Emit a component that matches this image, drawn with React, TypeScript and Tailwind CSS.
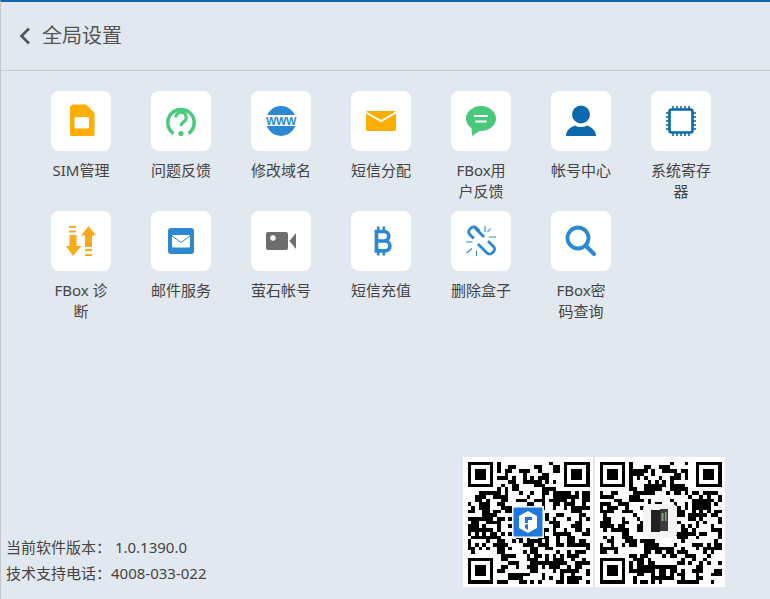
import React from "react";

const BLUE = "#2b88d3";
const DARK = "#0d69ae";
const ORANGE = "#ffae00";
const AMBER = "#f9ab1a";
const GREEN = "#49c97c";

function Svg({ children }: { children: React.ReactNode }) {
  return (
    <svg width="36" height="36" viewBox="0 0 36 36" fill="none">
      {children}
    </svg>
  );
}

const Sim = () => (
  <Svg>
    <path d="M8 3.5a1.5 1.5 0 0 1 1.5-1.5H22.5L31 10.500V32a1.500 1.500 0 0 1-1.500 1.500H8A1.500 1.500 0 0 1 6.500 32V3.500z" transform="translate(0.500 -0.500)" fill={ORANGE} />
    <rect x="11.500" y="14" width="14.500" height="11.500" rx="1.500" fill="#fff" />
  </Svg>
);
const Help = () => (
  <Svg>
    <path d="M10.500 30.500A13.200 13.200 0 1 1 25.500 30.500" stroke={GREEN} strokeWidth="3.500" strokeLinecap="butt" />
    <path d="M12.800 14.500a5.200 5.200 0 1 1 7.900 4.400c-1.800 1.100-2.700 1.900-2.700 4.100" stroke={GREEN} strokeWidth="3" />
    <circle cx="18" cy="30.500" r="2.600" fill={GREEN} />
  </Svg>
);
const Www = () => (
  <Svg>
    <circle cx="18" cy="18" r="15" fill={BLUE} />
    <rect x="3" y="12" width="30" height="11" fill="#fff" />
    <rect x="3" y="13.800" width="30" height="0" fill="#fff" />
    <text x="18" y="21.500" textAnchor="middle" fontSize="11" fontWeight="700" fill={BLUE} fontFamily="'Liberation Sans',sans-serif" letterSpacing="-0.300">WWW</text>
  </Svg>
);
const Mail = () => (
  <Svg>
    <rect x="3" y="8" width="30" height="20" rx="1.500" fill={ORANGE} />
    <path d="M3 9.500L18 18L33 9.500" stroke="#fff" strokeWidth="2" />
  </Svg>
);
const Chat = () => (
  <Svg>
    <path d="M18 3C9.700 3 3 8.600 3 15.500c0 3.900 2.100 7.400 5.500 9.700L9 33l7.500-5.100c.5 0 1 .1 1.500.1 8.300 0 15-5.600 15-12.500S26.300 3 18 3z" fill={GREEN} />
    <rect x="11" y="12" width="14" height="2" fill="#fff" />
    <rect x="12.500" y="17.500" width="11" height="2" fill="#fff" />
  </Svg>
);
const User = () => (
  <Svg>
    <circle cx="18" cy="11.500" r="9" fill={DARK} />
    <path d="M3 33c0-5.500 4.500-9 9-10.500 3.500 2 8.500 2 12 0C28.500 24 33 27.500 33 33z" fill={DARK} />
  </Svg>
);
const Chip = () => (
  <Svg>
    <rect x="6.500" y="6.500" width="23" height="23" rx="2" stroke={DARK} strokeWidth="2.600" />
    {[10, 14, 18, 22, 26].map((p) => (
      <g key={p} fill={DARK}>
        <rect x={p - 0.8} y="3" width="1.600" height="3" />
        <rect x={p - 0.8} y="30" width="1.600" height="3" />
        <rect x="3" y={p - 0.8} width="3" height="1.600" />
        <rect x="30" y={p - 0.8} width="3" height="1.600" />
      </g>
    ))}
  </Svg>
);
const Diag = () => (
  <Svg>
    <g fill={AMBER}>
      <rect x="6" y="3" width="7" height="2" />
      <rect x="6" y="7.500" width="7" height="2" />
      <path d="M6.500 12h7v11H18.500L10 33 3 23H6.500z" transform="translate(0 0)" />
      <path d="M25.500 3L33 12.500H29V24H22V12.500H18z" transform="translate(0 0)" />
      <rect x="22" y="26" width="7" height="2" />
      <rect x="22" y="31" width="7" height="2" />
    </g>
  </Svg>
);
const MailBox = () => (
  <Svg>
    <rect x="5" y="5" width="26" height="26" rx="3" fill={BLUE} />
    <rect x="9" y="12" width="18" height="12.500" rx="1" fill="#fff" />
    <path d="M9 13L18 19.500L27 13" stroke={BLUE} strokeWidth="1" />
  </Svg>
);
const Cam = () => (
  <Svg>
    <rect x="3" y="9" width="22" height="18" rx="2" fill="#6e6e6e" />
    <circle cx="10" cy="15" r="2.700" fill="#fff" />
    <path d="M26.500 18L33 10V26z" fill="#6e6e6e" />
  </Svg>
);
const Btc = () => (
  <Svg>
    <path d="M11.500 8.500H21a4.700 4.700 0 0 1 0 9.500H13.500M13.500 18H22a4.900 4.900 0 0 1 0 9.800H11.500M13.500 8.500V27.800" stroke={BLUE} strokeWidth="3.700" />
    <path d="M15.200 3.500V7M20.800 3.500V7M15.200 29V32.500M20.800 29V32.500" stroke={BLUE} strokeWidth="2.600" />
  </Svg>
);
const Broken = () => (
  <Svg>
    <path d="M10.800 15.500L6.800 11.500a3.700 3.700 0 0 1 0-5.300l1.300-1.200a3.700 3.700 0 0 1 5.200 0L16.500 8.200" stroke={BLUE} strokeWidth="2.800" transform="translate(0 0)" />
    <path d="M8.500 6.500L17 6" stroke={BLUE} strokeWidth="0" />
    <path d="M12 5L21 14" stroke={BLUE} strokeWidth="2.800" />
    <path d="M15 21L24 30a3.700 3.700 0 0 0 5.200 0l1.300-1.300a3.700 3.700 0 0 0 0-5.200L25 18" stroke={BLUE} strokeWidth="2.800" />
    <path d="M22 3V9M27.500 5.500L24.500 9M33 14H26M3 19H9.500M3.500 30L9 25.500M13.500 28V33" stroke={BLUE} strokeWidth="1.100" />
  </Svg>
);
const Search = () => (
  <Svg>
    <circle cx="15" cy="15" r="10.500" stroke={BLUE} strokeWidth="3.800" />
    <path d="M23.500 23.500L31 31" stroke={BLUE} strokeWidth="4" strokeLinecap="round" />
  </Svg>
);

const items: { label: string; icon: React.ReactNode }[] = [
  { label: "SIM管理", icon: <Sim /> },
  { label: "问题反馈", icon: <Help /> },
  { label: "修改域名", icon: <Www /> },
  { label: "短信分配", icon: <Mail /> },
  { label: "FBox用户反馈", icon: <Chat /> },
  { label: "帐号中心", icon: <User /> },
  { label: "系统寄存器", icon: <Chip /> },
  { label: "FBox 诊断", icon: <Diag /> },
  { label: "邮件服务", icon: <MailBox /> },
  { label: "萤石帐号", icon: <Cam /> },
  { label: "短信充值", icon: <Btc /> },
  { label: "删除盒子", icon: <Broken /> },
  { label: "FBox密码查询", icon: <Search /> },
];

function qrModules(seed: number) {
  const n = 33;
  const rects: { x: number; y: number }[] = [];
  let s = seed;
  const rnd = () => {
    s = (s * 1664525 + 1013904223) >>> 0;
    return (s >>> 16) / 65536;
  };
  const inFinder = (x: number, y: number) =>
    (x < 8 && y < 8) || (x >= n - 8 && y < 8) || (x < 8 && y >= n - 8);
  const grid: boolean[][] = [];
  for (let y = 0; y < n; y++) {
    grid.push([]);
    for (let x = 0; x < n; x++) {
      const prevA = x > 0 ? grid[y][x - 1] : false;
      const prevB = y > 0 ? grid[y - 1][x] : false;
      const p = 0.34 + (prevA ? 0.14 : 0) + (prevB ? 0.14 : 0);
      grid[y].push(rnd() < p);
      if (grid[y][x] && !inFinder(x, y)) rects.push({ x, y });
    }
  }
  return rects;
}

function Finder({ x, y }: { x: number; y: number }) {
  return (
    <g>
      <path d={`M${x} ${y}h7v7h-7zM${x + 1} ${y + 1}v5h5v-5z`} fill="#000" fillRule="evenodd" />
      <rect x={x + 2} y={y + 2} width="3" height="3" fill="#000" />
    </g>
  );
}

function Qr({ seed, logo }: { seed: number; logo: "blue" | "device" }) {
  const mods = qrModules(seed);
  return (
    <svg width="130" height="130" viewBox="0 0 130 130" className="block">
      <rect width="130" height="130" fill="#fff" />
      <g transform="translate(4.500 4.500) scale(3.700)" shapeRendering="crispEdges">
        {mods.map((m) => (
          <rect key={`${m.x}-${m.y}`} x={m.x} y={m.y} width="1" height="1" fill="#000" />
        ))}
        <Finder x={0} y={0} />
        <Finder x={26} y={0} />
        <Finder x={0} y={26} />
      </g>
      {logo === "blue" ? (
        <g>
          <rect x="49" y="49" width="32" height="32" fill="#fff" />
          <rect x="50.500" y="50.500" width="29" height="29" rx="1" fill="#1f78dc" />
          <path d="M65 54l9 5v12l-9 5-9-5V59z" fill="#fff" />
          <path d="M62 60h7v3h-4v3h-3zM62 68l3-1v6l-3-2z" fill="#1f78dc" />
        </g>
      ) : (
        <g>
          <rect x="48" y="47" width="34" height="34" rx="5" fill="#f4f4f4" />
          <rect x="56" y="53" width="9" height="22" fill="#222" />
          <rect x="65" y="52" width="8" height="22" fill="#3b3b3b" />
          <rect x="66.500" y="56" width="2" height="8" fill="#7fae6e" />
          <rect x="70" y="55" width="1.500" height="9" fill="#9a9a9a" />
        </g>
      )}
    </svg>
  );
}

export default function App() {
  return (
    <div
      className="flex h-[599px] w-[770px] flex-col overflow-hidden border-t-2 border-l border-t-[#0d69ae] border-l-[#c4c6c8] bg-[#e1e8ef] text-[15px] leading-[21px] text-[#444]"
      style={{ fontFamily: '"Noto Sans","Noto Sans CJK SC",sans-serif' }}
    >
      <header className="flex h-[69px] shrink-0 items-center border-b border-[#c9cbcd] pl-[18px]">
        <svg width="12" height="18" viewBox="0 0 12 18" fill="none">
          <path d="M10 1.500L2.500 9L10 16.500" stroke="#555" strokeWidth="2.600" />
        </svg>
        <span className="ml-[11px] text-[20px] leading-[28px] text-[#555]">全局设置</span>
      </header>
      <main className="grid flex-1 grid-cols-[repeat(7,100px)] content-start pl-[50px] pt-5">
        {items.map((it) => (
          <div key={it.label} className="h-[120px] w-[60px]">
            <div className="flex h-[60px] w-[60px] items-center justify-center rounded-[8px] bg-white">{it.icon}</div>
            <div className="mt-[9px] text-center break-all">{it.label}</div>
          </div>
        ))}
      </main>
      <footer className="flex items-end justify-between pb-3 pl-[5px] pr-[45px]">
        <div className="pb-[1px] text-[15px] leading-[26px]">
          <div>当前软件版本： 1.0.1390.0</div>
          <div>技术支持电话：4008-033-022</div>
        </div>
        <div className="flex gap-[2px]">
          <Qr seed={7} logo="blue" />
          <Qr seed={41} logo="device" />
        </div>
      </footer>
    </div>
  );
}
